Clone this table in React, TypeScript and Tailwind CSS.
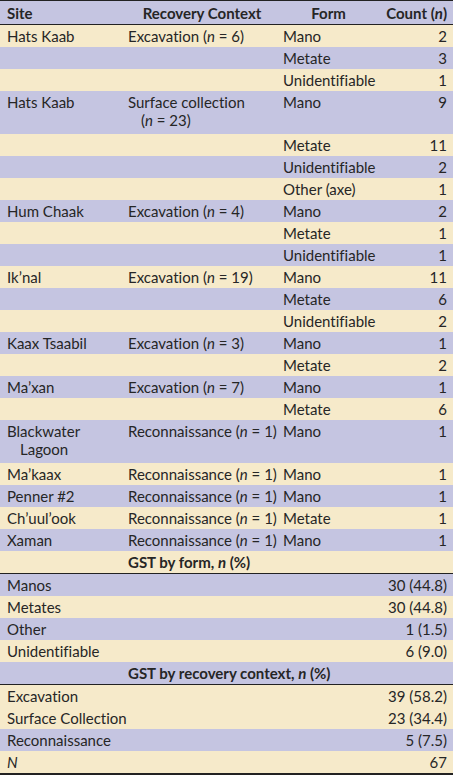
import React from "react";

type Row = {
  site?: React.ReactNode;
  context?: React.ReactNode;
  form?: string;
  count: string;
  bg: "b" | "l";
  tall?: boolean;
};

const N = () => <i>n</i>;

const ctx = (label: string, n: number) => (
  <>
    {label} (<N /> = {n})
  </>
);

const rows: Row[] = [
  { site: "Hats Kaab", context: ctx("Excavation", 6), form: "Mano", count: "2", bg: "b" },
  { form: "Metate", count: "3", bg: "l" },
  { form: "Unidentifiable", count: "1", bg: "b" },
  {
    site: "Hats Kaab",
    context: (
      <>
        Surface collection
        <br />
        (<N /> = 23)
      </>
    ),
    form: "Mano",
    count: "9",
    bg: "l",
    tall: true,
  },
  { form: "Metate", count: "11", bg: "b" },
  { form: "Unidentifiable", count: "2", bg: "l" },
  { form: "Other (axe)", count: "1", bg: "b" },
  { site: "Hum Chaak", context: ctx("Excavation", 4), form: "Mano", count: "2", bg: "l" },
  { form: "Metate", count: "1", bg: "b" },
  { form: "Unidentifiable", count: "1", bg: "l" },
  { site: "Ik’nal", context: ctx("Excavation", 19), form: "Mano", count: "11", bg: "b" },
  { form: "Metate", count: "6", bg: "l" },
  { form: "Unidentifiable", count: "2", bg: "b" },
  { site: "Kaax Tsaabil", context: ctx("Excavation", 3), form: "Mano", count: "1", bg: "l" },
  { form: "Metate", count: "2", bg: "b" },
  { site: "Ma’xan", context: ctx("Excavation", 7), form: "Mano", count: "1", bg: "l" },
  { form: "Metate", count: "6", bg: "b" },
  {
    site: (
      <>
        Blackwater
        <br />
        Lagoon
      </>
    ),
    context: ctx("Reconnaissance", 1),
    form: "Mano",
    count: "1",
    bg: "l",
    tall: true,
  },
  { site: "Ma’kaax", context: ctx("Reconnaissance", 1), form: "Mano", count: "1", bg: "b" },
  { site: "Penner #2", context: ctx("Reconnaissance", 1), form: "Mano", count: "1", bg: "l" },
  { site: "Ch’uul’ook", context: ctx("Reconnaissance", 1), form: "Metate", count: "1", bg: "b" },
  { site: "Xaman", context: ctx("Reconnaissance", 1), form: "Mano", count: "1", bg: "l" },
];

const byForm: Row[] = [
  { site: "Manos", count: "30 (44.8)", bg: "l" },
  { site: "Metates", count: "30 (44.8)", bg: "b" },
  { site: "Other", count: "1 (1.5)", bg: "l" },
  { site: "Unidentifiable", count: "6 (9.0)", bg: "b" },
];

const byContext: Row[] = [
  { site: "Excavation", count: "39 (58.2)", bg: "b" },
  { site: "Surface Collection", count: "23 (34.4)", bg: "b" },
  { site: "Reconnaissance", count: "5 (7.5)", bg: "l" },
  { site: <i>N</i>, count: "67", bg: "b" },
];

const bgCls = (bg: "b" | "l") => (bg === "b" ? "bg-[#f6eaca]" : "bg-[#c5c5e1]");

function DataRow({ r }: { r: Row }) {
  const pad = r.tall ? "pt-[2px] pb-[5px]" : "py-[2px]";
  return (
    <tr className={bgCls(r.bg)}>
      {/* hanging indent for wrapped names */}
      <td className={`${pad} pl-[20px] -indent-[13px] align-top whitespace-nowrap`}>{r.site}</td>
      <td className={`${pad} pl-[20px] -indent-[13px] align-top whitespace-nowrap`}>{r.context}</td>
      <td className={`${pad} pl-[7px] align-top whitespace-nowrap`}>{r.form}</td>
      <td className={`${pad} pr-[6px] align-top text-right whitespace-nowrap`}>{r.count}</td>
    </tr>
  );
}

function SummaryRow({ r }: { r: Row }) {
  return (
    <tr className={bgCls(r.bg)}>
      <td colSpan={3} className="py-[2px] pl-[7px] whitespace-nowrap">
        {r.site}
      </td>
      <td className="py-[2px] pr-[6px] text-right whitespace-nowrap">{r.count}</td>
    </tr>
  );
}

function SectionRow({ label, bg }: { label: React.ReactNode; bg: "b" | "l" }) {
  return (
    <tr className={`${bgCls(bg)} border-b border-[#222]`}>
      <td className="py-[2px]" />
      <td colSpan={3} className="py-[2px] pl-[7px] font-bold whitespace-nowrap">
        {label}
      </td>
    </tr>
  );
}

export default function App() {
  return (
    <div className="w-[453px] bg-white font-['Lato',sans-serif] text-[15px] leading-[18px] text-[#262626] [font-variant-ligatures:none]">
      <table className="w-full table-fixed border-collapse">
        <colgroup>
          <col className="w-[121px]" />
          <col className="w-[155px]" />
          <col className="w-[105px]" />
          <col className="w-[72px]" />
        </colgroup>
        <thead>
          <tr className="bg-[#c5c5e1] border-t border-b border-[#222] font-bold">
            <th className="pt-[3px] pb-[2px] pl-[7px] text-left">Site</th>
            <th className="pt-[3px] pb-[2px] pl-[7px] text-center">Recovery Context</th>
            <th className="pt-[3px] pb-[2px] text-center">Form</th>
            <th className="pt-[3px] pb-[2px] pr-[6px] text-right whitespace-nowrap">
              Count (<i>n</i>)
            </th>
          </tr>
        </thead>
        <tbody>
          {rows.map((r, i) => (
            <DataRow key={i} r={r} />
          ))}
          <SectionRow
            bg="b"
            label={
              <>
                GST by form, <i>n</i> (%)
              </>
            }
          />
          {byForm.map((r, i) => (
            <SummaryRow key={i} r={r} />
          ))}
          <SectionRow
            bg="l"
            label={
              <>
                GST by recovery context, <i>n</i> (%)
              </>
            }
          />
          {byContext.map((r, i) => (
            <SummaryRow key={i} r={r} />
          ))}
        </tbody>
      </table>
      <div className="h-[2px] bg-[#222]" />
    </div>
  );
}
